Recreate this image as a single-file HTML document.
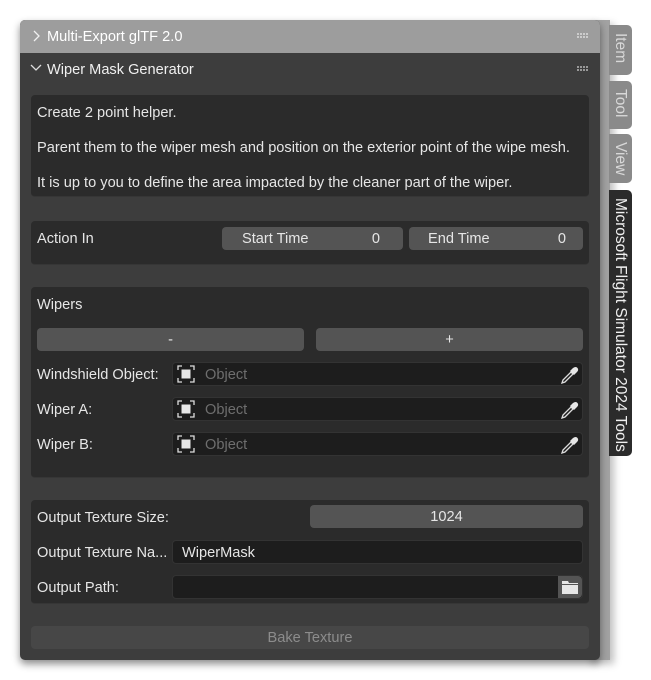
<!DOCTYPE html>
<html><head><meta charset="utf-8"><style>
*{margin:0;padding:0;box-sizing:border-box}
body{width:651px;height:680px;background:#fff;position:relative;overflow:hidden;font-family:"Liberation Sans",sans-serif;font-size:14.6px;color:#e6e6e6}
.a{position:absolute}
.t{position:absolute;white-space:nowrap;line-height:18px}
.box{position:absolute;background:#2b2b2b;border-radius:4px;left:31px;width:558px;border-bottom:1px solid #363636}
.btn{position:absolute;background:#545454;border-radius:4px;height:23px;line-height:24px;color:#e6e6e6;text-align:center}
.fld{position:absolute;background:#1d1d1d;border-radius:4px;height:24px;border:1px solid #333}
.tab{position:absolute;left:609px;width:23px;background:#8a8a8a;border-radius:0 5px 5px 0;color:#d8d8d8}
.tab span{position:absolute;left:3px;top:8px;writing-mode:vertical-rl;white-space:nowrap;font-size:15.5px;line-height:17px}
</style></head><body>
<div class="a" style="left:588px;top:20px;width:22px;height:640px;background:#a2a2a2;box-shadow:4px 4px 8px rgba(0,0,0,.25)"></div>
<div class="a" style="left:20px;top:20px;width:580px;height:640px;background:#3d3d3d;border-radius:5px;box-shadow:0 4px 8px rgba(0,0,0,.45)"></div>
<div class="a" style="left:20px;top:20px;width:580px;height:33px;background:#9d9d9d;border-radius:5px 5px 0 0"></div>
<svg class="a" style="left:31px;top:29px" width="10" height="14"><path d="M3 2 L8 7 L3 12" stroke="#f0f0f0" stroke-width="1.3" fill="none"/></svg>
<div class="t" style="left:47px;top:28px;color:#fff">Multi-Export glTF 2.0</div>
<svg class="a" style="left:577px;top:33px" width="14" height="6"><g fill="#ccc"><rect x="0" y="0" width="2" height="2"/><rect x="3" y="0" width="2" height="2"/><rect x="6" y="0" width="2" height="2"/><rect x="9" y="0" width="2" height="2"/><rect x="0" y="3" width="2" height="2"/><rect x="3" y="3" width="2" height="2"/><rect x="6" y="3" width="2" height="2"/><rect x="9" y="3" width="2" height="2"/></g></svg>
<svg class="a" style="left:29px;top:62px" width="14" height="12"><path d="M2 3 L7 8 L12 3" stroke="#ddd" stroke-width="1.3" fill="none"/></svg>
<div class="t" style="left:47px;top:61px;color:#f0f0f0">Wiper Mask Generator</div>
<svg class="a" style="left:577px;top:66px" width="14" height="6"><g fill="#999"><rect x="0" y="0" width="2" height="2"/><rect x="3" y="0" width="2" height="2"/><rect x="6" y="0" width="2" height="2"/><rect x="9" y="0" width="2" height="2"/><rect x="0" y="3" width="2" height="2"/><rect x="3" y="3" width="2" height="2"/><rect x="6" y="3" width="2" height="2"/><rect x="9" y="3" width="2" height="2"/></g></svg>

<div class="box" style="top:95px;height:102px"></div>
<div class="t" style="left:37px;top:104px">Create 2 point helper.</div>
<div class="t" style="left:37px;top:139px">Parent them to the wiper mesh and position on the exterior point of the wipe mesh.</div>
<div class="t" style="left:37px;top:174px">It is up to you to define the area impacted by the cleaner part of the wiper.</div>

<div class="box" style="top:221px;height:44px"></div>
<div class="t" style="left:37px;top:230px">Action In</div>
<div class="btn" style="left:222px;top:227px;width:181px"><span class="a" style="left:20px">Start Time</span><span class="a" style="right:23px">0</span></div>
<div class="btn" style="left:409px;top:227px;width:174px"><span class="a" style="left:19px">End Time</span><span class="a" style="right:17px">0</span></div>

<div class="box" style="top:287px;height:191px"></div>
<div class="t" style="left:37px;top:296px">Wipers</div>
<div class="btn" style="left:37px;top:328px;width:267px">-</div>
<div class="btn" style="left:316px;top:328px;width:267px">+</div>
<div class="t" style="left:37px;top:366px">Windshield Object:</div>
<div class="t" style="left:37px;top:401px">Wiper A:</div>
<div class="t" style="left:37px;top:436px">Wiper B:</div>
<div id="f1"></div>

<div class="box" style="top:500px;height:104px"></div>
<div class="t" style="left:37px;top:509px">Output Texture Size:</div>
<div class="btn" style="left:310px;top:505px;width:273px">1024</div>
<div class="t" style="left:37px;top:544px">Output Texture Na...</div>
<div class="fld" style="left:172px;top:540px;width:411px"><span class="t" style="left:9px;top:3px">WiperMask</span></div>
<div class="t" style="left:37px;top:579px">Output Path:</div>
<div class="fld" style="left:172px;top:575px;width:411px"></div>
<div class="a" style="left:558px;top:576px;width:24px;height:22px;background:#545454;border-radius:0 4px 4px 0"></div>
<svg class="a" style="left:561px;top:579px" width="18" height="16"><path d="M1 2 H7 L8 4 H17 V5 H1Z M1 6 H17 V15 H1Z" fill="#e6e6e6"/></svg>

<div class="a" style="left:31px;top:626px;width:558px;height:23px;background:#474747;border-radius:4px;text-align:center;line-height:24px;color:#8c8c8c">Bake Texture</div>

<div class="tab" style="top:25px;height:50px"><span>Item</span></div>
<div class="tab" style="top:81px;height:48px"><span>Tool</span></div>
<div class="tab" style="top:134px;height:49px"><span>View</span></div>
<div class="tab" style="top:190px;height:266px;background:#2b2b2b;color:#f0f0f0"><span>Microsoft Flight Simulator 2024 Tools</span></div>

<script>
var h='';[362,397,432].forEach(function(y){
h+='<div class="fld" style="left:172px;top:'+y+'px;width:411px"></div>'+
'<svg class="a" style="left:177px;top:'+(y+3)+'px" width="18" height="18"><path d="M1 5V1H5M13 1H17V5M17 13V17H13M5 17H1V13" stroke="#ddd" stroke-width="1.3" fill="none"/><rect x="4.5" y="4.5" width="9" height="9" fill="#e8e8e8"/></svg>'+
'<div class="t" style="left:205px;top:'+(y+4)+'px;color:#6e6e6e">Object</div>'+
'<svg class="a" style="left:560px;top:'+(y+3)+'px" width="20" height="20"><path d="M2 18 L3 15 L11 7 L13 9 L5 17Z" fill="none" stroke="#ddd" stroke-width="1.3"/><path d="M10 6 L13 3 Q16 1 17.5 3 Q19 5 17 7 L14 10Z" fill="#e6e6e6"/></svg>';
});document.getElementById('f1').outerHTML=h;
</script>
</body></html>
